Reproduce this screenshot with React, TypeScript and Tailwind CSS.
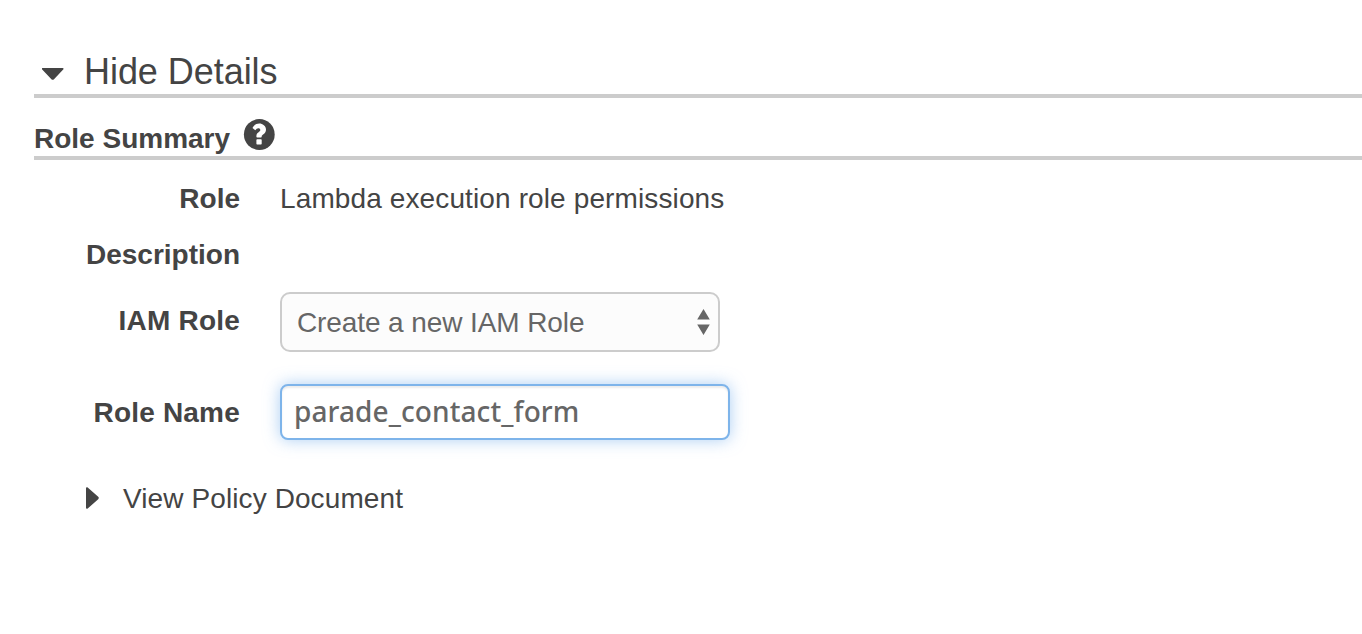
import React from 'react';

function QuestionIcon() {
  return (
    <svg className="mt-[21px] ml-[14px] block size-[32px] shrink-0" viewBox="0 0 32 32" aria-label="Help">
      <circle cx="16.3" cy="15.5" r="15.4" fill="#444444" />
      <path d="M9.5 8.9C11.1 6 13.3 4.6 16.3 4.6c3.2 0 6.7 2.5 6.7 5.9 0 4.6-4.3 4.9-4.3 7v.3c0 .4-.3.7-.7.7h-3.9c-.4 0-.7-.3-.7-.7v-.7c0-4 3.9-4.1 3.9-6.2 0-1.1-.9-1.6-1.9-1.6-1.4 0-2.1.7-3.1 2ZM14.1 20.2H18c.4 0 .7.3.7.7v3.9c0 .4-.3.7-.7.7h-3.9c-.4 0-.7-.3-.7-.7v-3.9c0-.4.3-.7.7-.7Z" fill="#ffffff" />
    </svg>
  );
}

export default function App() {
  return (
    <main className="flex h-[634px] w-full flex-col items-start overflow-hidden bg-white pl-[34px] font-['Liberation_Sans',Arial,sans-serif] text-[28px] leading-10 text-[#444444]">
      <header className="flex h-[98px] w-full shrink-0 items-start border-b-4 border-[#cccccc] pt-[48px]">
        <svg className="mt-[20px] ml-[8px] h-3 w-[22px]" viewBox="0 0 22 12">
          <path d="M.8 0h19.8c1 0 1.3.8.6 1.5L12 11.2c-.8.8-1.8.8-2.6 0L.2 1.5C-.4.8-.1 0 .8 0Z" fill="#444444" />
        </svg>
        <h1 className="ml-[20px] text-[36px] leading-[48px] tracking-[-0.05px]">Hide Details</h1>
      </header>
      <div className="flex h-[62px] w-full shrink-0 items-start border-b-4 border-[#cccccc]">
        <h2 className="mt-[21px] w-[195px] font-bold whitespace-nowrap">Role Summary</h2>
        <QuestionIcon />
      </div>
      <div className="mt-[19px] flex items-start gap-10">
        <div className="flex w-[206px] flex-col gap-4 text-right font-bold">
          <span>Role</span>
          <span>Description</span>
        </div>
        <p className="tracking-[0.12px] whitespace-nowrap">Lambda execution role permissions</p>
      </div>
      <div className="mt-[17px] flex items-start gap-10">
        <label className="mt-[9px] w-[206px] text-right font-bold tracking-[0.2px]">IAM Role</label>
        <button className="flex h-[60px] w-[440px] items-center justify-between rounded-[10px] border-2 border-[#cccccc] bg-[#fcfcfc] pr-[7px] pl-[15px] text-[#666666]">
          <span className="pt-0.5 tracking-[-0.1px]">Create a new IAM Role</span>
          <svg className="h-[26px] w-[14px]" viewBox="0 0 14 26">
            <path d="M6.5 0l6.3 10.5H.2ZM.2 15.5h12.6L6.5 26Z" fill="#666666" />
          </svg>
        </button>
      </div>
      <div className="mt-8 flex items-start gap-10">
        <label className="mt-[9px] w-[206px] text-right font-bold tracking-[0.2px]">Role Name</label>
        <div className="flex h-14 w-[450px] items-center rounded-[8px] border-2 border-[#7eb4ea] bg-white pl-3 text-[#666666] shadow-[0_0_16px_rgba(102,165,233,0.55),inset_0_2px_2px_rgba(0,0,0,0.08)]">
          <span className="pb-0.5 font-['Noto_Sans',sans-serif] text-[28px] font-medium tracking-[0.1px]">parade_contact_form</span>
        </div>
      </div>
      <div className="mt-[39px] ml-[52px] flex items-start">
        <svg className="mt-[8px] h-[22px] w-[13px]" viewBox="0 0 13 22">
          <path d="M0 1.2C0 0 1 0 1.7.6l10.5 9.2c.8.7.8 1.7 0 2.4L1.7 21.4C1 22 0 22 0 20.8Z" fill="#444444" />
        </svg>
        <span className="ml-6 tracking-[0.1px]">View Policy Document</span>
      </div>
    </main>
  );
}
